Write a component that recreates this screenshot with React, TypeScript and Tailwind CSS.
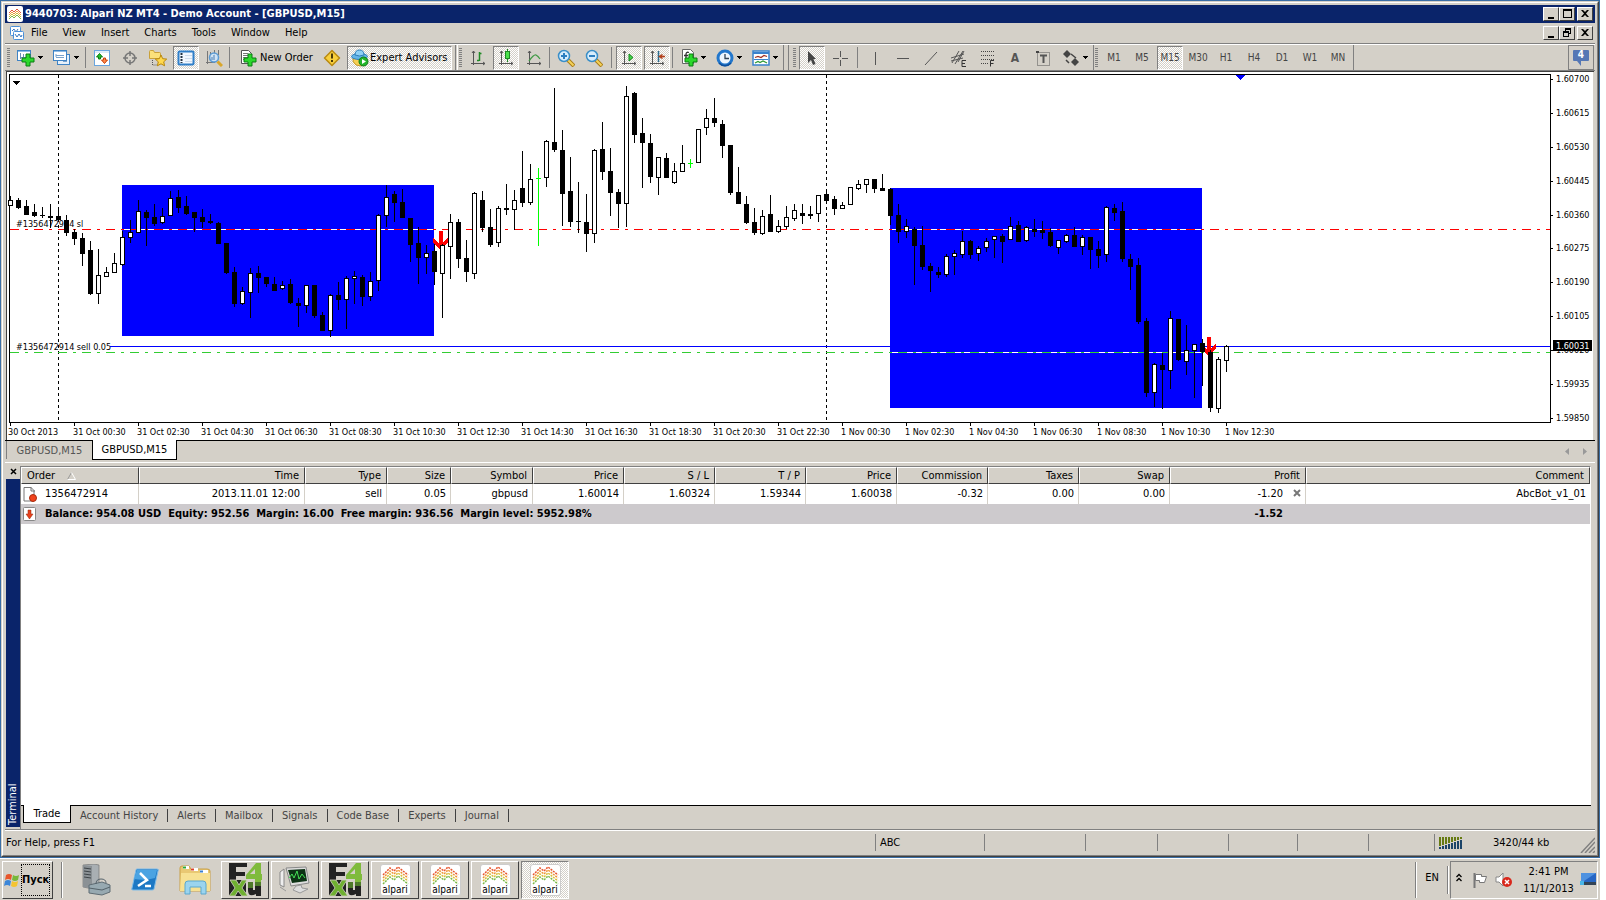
import React from 'react'

type Kind = 'w' | 'b' | 'g'
type Candle = [number, number, number, number, Kind]

// high, body top, body bottom, low, fill
const CANDLES: Candle[] = [
  [126, 130, 136, 136, 'w'], [128, 130, 138, 139, 'b'], [130, 136, 145, 145, 'b'], [134, 142, 146, 147, 'b'],
  [137, 145, 146, 148, 'b'], [134, 146, 148, 158, 'b'], [137, 146, 150, 151, 'b'], [145, 150, 163, 166, 'b'],
  [159, 162, 169, 175, 'b'], [163, 168, 184, 196, 'b'], [171, 180, 224, 225, 'b'], [179, 205, 224, 234, 'w'],
  [197, 202, 207, 207, 'w'], [183, 193, 203, 203, 'w'], [161, 167, 195, 196, 'w'], [150, 162, 168, 173, 'w'],
  [130, 141, 163, 163, 'w'], [140, 142, 148, 176, 'b'], [134, 147, 154, 156, 'b'], [138, 146, 153, 154, 'w'],
  [121, 128, 146, 146, 'w'], [120, 127, 138, 143, 'b'], [126, 136, 144, 145, 'b'], [142, 142, 148, 162, 'b'],
  [139, 147, 152, 158, 'b'], [144, 151, 153, 154, 'b'], [152, 153, 174, 174, 'b'], [173, 173, 203, 204, 'b'],
  [197, 202, 234, 237, 'b'], [217, 221, 234, 235, 'w'], [198, 203, 223, 248, 'w'], [196, 203, 208, 223, 'b'],
  [207, 207, 214, 217, 'b'], [207, 214, 221, 221, 'b'], [211, 215, 219, 220, 'w'], [209, 214, 233, 234, 'b'],
  [228, 233, 236, 257, 'b'], [215, 215, 236, 243, 'w'], [215, 215, 246, 248, 'b'], [242, 245, 261, 261, 'b'],
  [224, 225, 261, 267, 'w'], [212, 225, 230, 240, 'b'], [206, 208, 230, 259, 'w'], [201, 206, 209, 234, 'w'],
  [205, 207, 227, 236, 'b'], [202, 211, 227, 231, 'w'], [144, 145, 211, 221, 'w'], [115, 127, 146, 157, 'w'],
  [121, 124, 133, 152, 'b'], [119, 132, 148, 148, 'b'], [148, 148, 175, 192, 'b'], [157, 173, 188, 214, 'b'],
  [175, 183, 188, 204, 'w'], [174, 181, 202, 215, 'b'], [174, 175, 204, 248, 'w'], [144, 152, 177, 209, 'w'],
  [149, 152, 189, 198, 'b'], [170, 188, 202, 212, 'b'], [122, 123, 204, 209, 'w'], [121, 130, 158, 162, 'b'],
  [139, 157, 175, 177, 'b'], [136, 138, 173, 177, 'w'], [114, 138, 140, 145, 'b'], [120, 130, 140, 160, 'w'],
  [81, 118, 133, 137, 'b'], [94, 109, 133, 135, 'w'], [98, 108, 109, 176, 'g'], [70, 71, 108, 117, 'w'],
  [18, 72, 80, 82, 'b'], [60, 80, 124, 156, 'b'], [87, 121, 152, 157, 'b'], [112, 151, 152, 163, 'b'],
  [124, 152, 164, 182, 'b'], [79, 80, 164, 173, 'w'], [52, 79, 102, 110, 'b'], [78, 101, 123, 146, 'b'],
  [119, 122, 134, 158, 'b'], [16, 26, 134, 157, 'w'], [22, 23, 65, 73, 'b'], [48, 63, 73, 118, 'b'],
  [64, 73, 107, 113, 'b'], [87, 87, 108, 125, 'w'], [83, 88, 108, 108, 'b'], [93, 101, 113, 114, 'w'],
  [75, 93, 102, 102, 'w'], [89, 93, 94, 98, 'g'], [59, 59, 93, 93, 'w'], [39, 48, 58, 65, 'w'],
  [28, 48, 53, 57, 'b'], [50, 54, 76, 88, 'b'], [75, 75, 123, 125, 'b'], [97, 122, 134, 134, 'b'],
  [126, 134, 153, 154, 'b'], [138, 152, 163, 165, 'b'], [140, 146, 164, 165, 'w'], [125, 144, 162, 162, 'b'],
  [150, 156, 162, 163, 'w'], [136, 147, 157, 159, 'w'], [134, 140, 149, 151, 'w'], [134, 143, 146, 154, 'b'],
  [136, 144, 146, 149, 'b'], [125, 125, 144, 152, 'w'], [120, 124, 131, 134, 'b'], [126, 129, 139, 145, 'b'],
  [132, 135, 139, 139, 'w'], [117, 117, 135, 135, 'w'], [110, 114, 119, 120, 'w'], [109, 109, 115, 123, 'w'],
  [109, 109, 119, 123, 'b'], [104, 118, 121, 121, 'b'], [118, 119, 146, 155, 'b'], [134, 145, 162, 173, 'b'],
  [149, 156, 162, 168, 'w'], [157, 159, 176, 215, 'b'], [156, 175, 197, 200, 'b'], [193, 196, 201, 222, 'b'],
  [197, 202, 205, 208, 'b'], [184, 186, 205, 207, 'w'], [180, 183, 187, 205, 'w'], [161, 171, 185, 188, 'w'],
  [170, 171, 185, 189, 'b'], [176, 178, 184, 191, 'w'], [168, 171, 178, 182, 'w'], [166, 166, 170, 188, 'w'],
  [164, 166, 172, 193, 'b'], [147, 156, 170, 170, 'w'], [151, 155, 172, 172, 'b'], [156, 157, 171, 172, 'w'],
  [149, 159, 162, 167, 'b'], [151, 160, 163, 169, 'b'], [158, 162, 176, 177, 'b'], [170, 170, 178, 184, 'w'],
  [164, 165, 172, 173, 'w'], [157, 165, 177, 177, 'b'], [165, 167, 177, 185, 'w'], [167, 167, 180, 199, 'b'],
  [171, 179, 186, 198, 'b'], [136, 137, 185, 192, 'w'], [134, 138, 143, 151, 'b'], [132, 141, 189, 192, 'b'],
  [184, 189, 197, 220, 'b'], [188, 195, 252, 254, 'b'], [248, 251, 323, 327, 'b'], [293, 294, 323, 337, 'w'],
  [283, 295, 300, 339, 'b'], [241, 248, 301, 319, 'w'], [249, 249, 290, 291, 'b'], [255, 280, 292, 305, 'w'],
  [274, 274, 281, 328, 'w'], [269, 273, 282, 316, 'b'], [280, 282, 338, 342, 'b'], [287, 289, 339, 343, 'w'],
  [275, 276, 291, 302, 'w'],
]

const TIMES = [
  '30 Oct 2013', '31 Oct 00:30', '31 Oct 02:30', '31 Oct 04:30', '31 Oct 06:30', '31 Oct 08:30', '31 Oct 10:30',
  '31 Oct 12:30', '31 Oct 14:30', '31 Oct 16:30', '31 Oct 18:30', '31 Oct 20:30', '31 Oct 22:30', '1 Nov 00:30',
  '1 Nov 02:30', '1 Nov 04:30', '1 Nov 06:30', '1 Nov 08:30', '1 Nov 10:30', '1 Nov 12:30',
]

const PRICES: [string, number][] = [
  ['1.60700', 9], ['1.60615', 43], ['1.60530', 77], ['1.60445', 111], ['1.60360', 145], ['1.60275', 178],
  ['1.60190', 212], ['1.60105', 246], ['1.60020', 280], ['1.59935', 314], ['1.59850', 348],
]

const RAISED = 'border border-t-white border-l-white border-r-[#404040] border-b-[#404040] bg-[#d4d0c8]'
const PRESSED =
  'border border-t-[#808080] border-l-[#808080] border-r-white border-b-white bg-[repeating-conic-gradient(#fff_0_25%,#d4d0c8_0_50%)] bg-[length:2px_2px]'

function Candles() {
  return (
    <>
      {CANDLES.map(([high, top, bottom, low, kind], i) => {
        const x = 10 + i * 8
        const color = kind === 'g' ? '#0f0' : '#000'
        return (
          <g key={i}>
            <rect x={x} y={high} width="1" height={low - high} fill={color} />
            <rect x={x - 2} y={top} width="5" height={bottom - top} fill={color} />
            {kind === 'w' ? <rect x={x - 1} y={top + 1} width="3" height={bottom - top - 2} fill="#fff" /> : null}
          </g>
        )
      })}
    </>
  )
}

function SellArrow({ x, y }: { x: number; y: number }) {
  return <path d={`M${x - 2} ${y}h4v11l5-4v4l-4 4-3 3h-1l-3-2-4-4v-5l6 5z`} fill="#f00" />
}

function Chart() {
  return (
    <div className="flex h-[369px] border-t border-l border-[#404040] bg-white text-[9px]">
      <svg className="h-[368px] min-w-0 flex-1" shapeRendering="crispEdges" role="img" aria-label="GBPUSD,M15">
        <rect x="2" y="2" width="100%" height="1" />
        <rect x="2" y="350" width="100%" height="1" />
        <rect x="2" y="2" width="1" height="349" />
        <g transform="translate(-7 -2)">
          <path d="M13 11h7v1h-1v1h-1v1h-1v1h-1v-1h-1v-1h-1v-1h-1z" />
          <path d="M1236 5h9l-4 5h-1z" fill="#00f" />
          <path d="M58.5 5v345M826.5 5v345" stroke="#000" strokeDasharray="3 3" />
          <rect x="110" y="276" width="100%" height="1" fill="#00f" />
          <rect x="122" y="115" width="312" height="151" fill="#00f" />
          <rect x="890" y="118" width="312" height="220" fill="#00f" />
          <path d="M122 159.500H434M890 159.500H1202M890 282.500H1202" stroke="#fff" />
          <path d="M10 159.500H4000" stroke="#f00" strokeDasharray="9 6 3 6" />
          <path d="M10 282.500H4000" stroke="#32cd32" strokeDasharray="9 6 3 6" />
          <text x="16" y="157">#1356472914 sl</text>
          <text x="16" y="280">#1356472914 sell 0.05</text>
          <SellArrow x={441} y={161} />
          <SellArrow x={1209} y={267} />
          <Candles />
          {TIMES.map((time, i) => (
            <g key={time}>
              <rect x={10 + i * 64} y="353" width="1" height="3" />
              <text x={(i ? 9 : 8) + i * 64} y="365">
                {time}
              </text>
            </g>
          ))}
        </g>
      </svg>
      <svg className="h-[368px] w-[44px] shrink-0 border-r border-[#d4d0c8]" shapeRendering="crispEdges">
        <rect y="2" width="1" height="349" />
        {PRICES.map(([price, y]) => (
          <g key={price}>
            <rect x="1" y={y - 2} width="2" height="1" />
            <text x="6" y={y + 1}>
              {price}
            </text>
          </g>
        ))}
        <rect x="3" y="268" width="39" height="11" />
        <text x="6" y="277" fill="#fff">
          1.60031
        </text>
      </svg>
    </div>
  )
}

function Svg({ children, size = 18 }: { children: React.ReactNode; size?: number }) {
  return (
    <svg width={size} height={size} viewBox={`0 0 ${size} ${size}`} fill="none" className="shrink-0" aria-hidden="true">
      {children}
    </svg>
  )
}

const PLUS = <path d="M10 6h4v4h4v4h-4v4h-4v-4H6v-4h4z" fill="#2bd82b" stroke="#0a7d12" transform="translate(-1 -1)" />
const AXES = <path d="M4.500 2v14M2 14.500h14M3 4l1.500-2L6 4M14 13l2 1.500-2 1.500" stroke="#555" />

const icons = {
  newChart: (
    <Svg>
      <rect x=".5" y="1.500" width="13" height="10" fill="#fff" stroke="#3f83c4" />
      <path d="M1 2.500h12" stroke="#8fbce6" />
      <path d="M3.500 4v6M3 8.500h7M6.500 5v3" stroke="#6b8fb3" />
      {PLUS}
    </Svg>
  ),
  profiles: (
    <Svg>
      <rect x="4.500" y="5.500" width="12" height="10" fill="#e6f0fa" stroke="#3f83c4" />
      <rect x=".5" y="1.500" width="13" height="10" fill="#fff" stroke="#3f83c4" />
      <path d="M1 2.500h12" stroke="#8fbce6" />
      <path d="M3 6.500h8M3 8.500h8M10 12.500h4M3 5v3" stroke="#7aa3cc" />
    </Svg>
  ),
  market: (
    <Svg>
      <rect x="1.500" y="1.500" width="15" height="15" fill="#fff" stroke="#6aa5de" />
      <path d="M2 3h14" stroke="#bcd8f2" />
      <path d="M6.500 4.500l3 3.500h-2v2h-2V8h-2z" fill="#1fc02a" stroke="#0b7a13" />
      <path d="M11.500 14.500l3-3.500h-2V9h-2v2h-2z" fill="#ff8a4a" stroke="#c8400c" />
    </Svg>
  ),
  crosshair: (
    <Svg>
      <circle cx="9" cy="9" r="5" stroke="#777" strokeWidth="1.500" />
      <path d="M9 2v5M9 11v5M2 9h5M11 9h5" stroke="#777" strokeWidth="1.500" />
    </Svg>
  ),
  navigator: (
    <Svg>
      <path d="M.5 2.500q0-1 1-1h3l1 2h5q1 0 1 1v5h-11z" fill="#fbe07a" stroke="#c9a13a" />
      <path d="M3.500 11v5h5" stroke="#555" strokeDasharray="1 1" />
      <path d="M12 6l1.700 3.700 4 .4-3 2.700.9 4-3.600-2-3.600 2 .9-4-3-2.700 4-.4z" fill="#ffd84d" stroke="#b8860b" />
    </Svg>
  ),
  terminal: (
    <Svg>
      <rect x="1.500" y="2.500" width="15" height="13" rx="1" fill="#f2f8ff" stroke="#2f7fc9" strokeWidth="2" />
      <path d="M4.500 4v10" stroke="#234" strokeWidth="2" strokeDasharray="2 1" />
      <path d="M8 6.500h7M8 9.500h7M8 12.500h7" stroke="#cfdcec" />
    </Svg>
  ),
  tester: (
    <Svg>
      <path d="M2.500 2v13M1 13.500h9M5.500 3v8M9.500 1v5M13.500 1v5" stroke="#777" />
      <circle cx="9" cy="8.500" r="4.500" fill="#cfe6fb" fillOpacity=".85" stroke="#5b9bd5" strokeWidth="1.500" />
      <path d="M12.500 12.500l4.500 4.500" stroke="#d9a62a" strokeWidth="3" />
      <path d="M9 6v5M7 8v3" stroke="#4a7fb5" />
    </Svg>
  ),
  order: (
    <Svg>
      <path d="M2.500 1.500h7l3 3v10h-10z" fill="#fff" stroke="#555" />
      <path d="M4 4.500h5M4 6.500h6M4 8.500h5M4 10.500h3" stroke="#777" />
      {PLUS}
    </Svg>
  ),
  warning: (
    <Svg>
      <path d="M9 1.500L16.500 9 9 16.500 1.500 9z" fill="#f8cf3c" stroke="#b98a10" strokeWidth="1.500" strokeLinejoin="round" />
      <path d="M9 4.500v5M9 11v2" stroke="#4b3a08" strokeWidth="2" />
    </Svg>
  ),
  expert: (
    <Svg>
      <path d="M2 9q-1 4 3 7l5 1q5-2 4-9z" fill="#f6cf52" stroke="#c2962a" />
      <ellipse cx="8.500" cy="7.500" rx="8" ry="3" fill="#62b4e8" stroke="#2b7cb8" />
      <path d="M4 6q0-5 4.500-5T13 6q-4.500 2-9 0z" fill="#8ed0f5" stroke="#2b7cb8" />
      <circle cx="12.500" cy="12.500" r="4.500" fill="#22b52a" stroke="#0d7a15" />
      <path d="M11 10l4 2.500-4 2.500z" fill="#fff" />
    </Svg>
  ),
  bars: (
    <Svg>
      {AXES}
      <path d="M10.500 3v9M10.500 4.500h2M8 11.500h2" stroke="#1f8a24" strokeWidth="1.500" />
    </Svg>
  ),
  candles: (
    <Svg>
      {AXES}
      <path d="M10.500 0v13" stroke="#1f8a24" />
      <rect x="8.500" y="2.500" width="4" height="7" fill="#4be04b" stroke="#1f8a24" />
    </Svg>
  ),
  line: (
    <Svg>
      {AXES}
      <path d="M4 12q5-7 7-6t4 4" stroke="#3f9a44" strokeWidth="1.300" />
    </Svg>
  ),
  zoomIn: (
    <Svg>
      <path d="M11 11l6 6" stroke="#a97c18" strokeWidth="4" />
      <path d="M11 11l5.500 5.500" stroke="#f4d25a" strokeWidth="2" />
      <circle cx="7" cy="7" r="5.500" fill="#d7edfc" stroke="#3a8fc8" strokeWidth="1.500" />
      <path d="M7 4v6M4 7h6" stroke="#2d7fc0" strokeWidth="2" />
    </Svg>
  ),
  zoomOut: (
    <Svg>
      <path d="M11 11l6 6" stroke="#a97c18" strokeWidth="4" />
      <path d="M11 11l5.500 5.500" stroke="#f4d25a" strokeWidth="2" />
      <circle cx="7" cy="7" r="5.500" fill="#d7edfc" stroke="#3a8fc8" strokeWidth="1.500" />
      <path d="M4 7h6" stroke="#2d7fc0" strokeWidth="2" />
    </Svg>
  ),
  scroll: (
    <Svg>
      {AXES}
      <path d="M9 5l4 3.500L9 12z" fill="#3fce45" stroke="#138a1b" />
    </Svg>
  ),
  shift: (
    <Svg>
      {AXES}
      <path d="M10.500 2v11" stroke="#2a6b8f" strokeWidth="1.500" />
      <path d="M17 7.500h-5M14.500 5.500l-3 2 3 2" stroke="#b2401c" strokeWidth="1.500" />
    </Svg>
  ),
  indicators: (
    <Svg>
      <path d="M2.500 .5h8l3 3v11h-11z" fill="#fff" stroke="#666" />
      <path d="M9 3.500q-3-1-3 2v6M4 6.500h4" stroke="#333" strokeWidth="1.300" />
      {PLUS}
    </Svg>
  ),
  clock: (
    <Svg>
      <circle cx="9" cy="9" r="7" fill="#eef6fd" stroke="#2277cc" strokeWidth="3" />
      <path d="M9 5v4.500h4" stroke="#345" strokeWidth="1.300" />
      <path d="M3 14a8 8 0 0 0 12 0" stroke="#0d4f9c" strokeWidth="1.500" />
    </Svg>
  ),
  template: (
    <Svg>
      <rect x="1" y="2" width="16" height="14" fill="#fff" stroke="#3a82cc" strokeWidth="1.500" />
      <path d="M1 4h16" stroke="#3a82cc" strokeWidth="2" />
      <path d="M3 8.500l3-1 3 1 3-2 3 1" stroke="#a03020" strokeWidth="1.300" />
      <path d="M2 10.500h14" stroke="#3a82cc" />
      <path d="M3 14l3-1.500 2 1 3-1.500 4 2" stroke="#2e9a34" strokeWidth="1.200" />
    </Svg>
  ),
  cursor: (
    <Svg>
      <path d="M5 2v12l3-3 2 5 2.500-1-2-5H13z" fill="#444" />
    </Svg>
  ),
  cross: (
    <Svg>
      <path d="M9.500 2v6M9.500 11v6M2 9.500h6M11 9.500h6" stroke="#555" />
    </Svg>
  ),
  vline: (
    <Svg>
      <path d="M9.500 3v13" stroke="#555" />
    </Svg>
  ),
  hline: (
    <Svg>
      <path d="M3 9.500h12" stroke="#555" />
    </Svg>
  ),
  trend: (
    <Svg>
      <path d="M3 16L15 3" stroke="#555" />
    </Svg>
  ),
  channel: (
    <Svg>
      <path d="M2 14L9 2M5 15l8-13M8 13l6-11M1 9l13-4M1 12l12-3" stroke="#555" />
      <path d="M16 11.500h-4v6h4M12 14.500h3" stroke="#333" />
    </Svg>
  ),
  fibo: (
    <Svg>
      <path d="M3 2.500h13M3 6.500h13M3 10.500h13M3 14.500h8" stroke="#444" strokeDasharray="1 1" />
      <path d="M16 11.500h-3.500v6M12.500 14.500h3" stroke="#333" />
    </Svg>
  ),
  label: (
    <Svg>
      <rect x="3.500" y="3.500" width="12" height="13" stroke="#555" strokeDasharray="1 1" />
      <path d="M6 6.500h7M9.500 6v8" stroke="#555" strokeWidth="2" />
      <path d="M2 2h3v2H2z" fill="#444" />
    </Svg>
  ),
  arrows: (
    <Svg>
      <path d="M5 1l4 4-4 4-4-4zM13 9l4 4-4 4-4-4z" fill="#444" />
      <path d="M4 11l3 3M9 5l5 4" stroke="#444" strokeWidth="1.500" />
    </Svg>
  ),
}

type IconName = keyof typeof icons

function Tool({ icon, label, pressed }: { icon: IconName; label: string; pressed?: boolean }) {
  return (
    <button
      type="button"
      aria-label={label}
      aria-pressed={pressed}
      className={`mx-px flex h-6 w-[26px] items-center justify-center ${pressed ? PRESSED : ''}`}
    >
      {icons[icon]}
    </button>
  )
}

function Caret() {
  return (
    <svg width="5" height="3" viewBox="0 0 5 3" shapeRendering="crispEdges" aria-hidden="true">
      <path d="M0 0h5v1H4v1H3v1H2V2H1V1H0z" />
    </svg>
  )
}

function SplitTool({ icon, label }: { icon: IconName; label: string }) {
  return (
    <button type="button" aria-label={label} className="flex h-6 w-9 items-center gap-[3px] pl-[5px]">
      {icons[icon]}
      <Caret />
    </button>
  )
}

function Divider({ wide }: { wide?: boolean }) {
  return <div className={`h-[21px] w-px shrink-0 bg-[#808080] ${wide ? 'mx-[3px]' : 'mr-[2px] ml-px'}`} />
}

function Grip() {
  return (
    <div className="mr-[2px] ml-px h-5 w-[3px] shrink-0 bg-[repeating-linear-gradient(#808080_0_1px,#d4d0c8_1px_2px)]" />
  )
}

function Toolbar() {
  return (
    <div className="flex h-[27px] items-center border-t border-b border-t-white border-b-[#808080] bg-[#d4d0c8]">
      <div className="flex h-full items-center border-r border-[#808080] pr-[3px] pl-px">
        <Grip />
        <SplitTool icon="newChart" label="New Chart" />
        <SplitTool icon="profiles" label="Profiles" />
        <Divider />
        <Tool icon="market" label="Market Watch" />
        <Tool icon="crosshair" label="Data Window" />
        <Tool icon="navigator" label="Navigator" />
        <Tool icon="terminal" label="Terminal" pressed />
        <Tool icon="tester" label="Strategy Tester" />
        <Divider />
        <button type="button" className="flex h-6 w-[86px] items-center gap-[3px] pl-[7px] whitespace-nowrap">
          {icons.order}
          New Order
        </button>
        <Tool icon="warning" label="MetaEditor" />
        <button
          type="button"
          aria-pressed
          className={`ml-px flex h-6 w-[105px] items-center gap-px pl-[3px] whitespace-nowrap ${PRESSED}`}
        >
          {icons.expert}
          Expert Advisors
        </button>
      </div>
      <div className="ml-px flex h-full items-center border-r border-l border-r-[#808080] border-l-white">
        <Grip />
        <Tool icon="bars" label="Bar Chart" />
        <Tool icon="candles" label="Candlesticks" pressed />
        <Tool icon="line" label="Line Chart" />
        <Divider />
        <Tool icon="zoomIn" label="Zoom In" />
        <Tool icon="zoomOut" label="Zoom Out" />
        <Divider wide />
        <Tool icon="scroll" label="Auto Scroll" pressed />
        <Tool icon="shift" label="Chart Shift" pressed />
        <Divider />
        <SplitTool icon="indicators" label="Indicators" />
        <SplitTool icon="clock" label="Periods" />
        <SplitTool icon="template" label="Templates" />
      </div>
      <div className="ml-1 flex h-full items-center border-r border-l border-r-[#808080] border-l-[#808080] pl-[3px]">
        <Grip />
        <Tool icon="cursor" label="Cursor" pressed />
        <Tool icon="cross" label="Crosshair" />
        <Divider wide />
        <Tool icon="vline" label="Vertical Line" />
        <Tool icon="hline" label="Horizontal Line" />
        <Tool icon="trend" label="Trendline" />
        <Tool icon="channel" label="Equidistant Channel" />
        <Tool icon="fibo" label="Fibonacci Retracement" />
        <button type="button" className="mx-px h-6 w-[26px] text-xs font-bold text-[#555]">
          A
        </button>
        <Tool icon="label" label="Text Label" />
        <SplitTool icon="arrows" label="Arrows" />
      </div>
      <div className="flex h-full items-center border-r border-[#808080] pr-px">
        <Grip />
        {['M1', 'M5', 'M15', 'M30', 'H1', 'H4', 'D1', 'W1', 'MN'].map((p) => (
          <button
            key={p}
            type="button"
            aria-pressed={p === 'M15'}
            className={`mx-px h-6 w-[26px] text-center text-[10px] text-[#444] ${p === 'M15' ? PRESSED : ''}`}
          >
            {p}
          </button>
        ))}
      </div>
      <button
        type="button"
        className="relative mr-px ml-auto flex h-[25px] w-[26px] items-center justify-center border border-[#808080]"
      >
        <svg width="18" height="18" viewBox="0 0 18 18" aria-hidden="true">
          <path d="M2 1h14q1 0 1 1v9q0 1-1 1H9v5l-4-5H2q-1 0-1-1V2q0-1 1-1z" fill="#5577b5" />
        </svg>
        <span className="absolute inset-x-0 top-[3px] text-center text-[10px] leading-3 font-bold text-white">4</span>
      </button>
    </div>
  )
}

function WinButton({ kind, label }: { kind: 'min' | 'max' | 'restore' | 'close'; label: string }) {
  const paths = {
    min: 'M3 9h6v2H3z',
    max: 'M2 1h9v9H2zM3 3v6h7V3z',
    restore: 'M4 1h6v6H8v3H2V4h2zM5 3v1h3v2h1V3zM3 6v3h4V6z',
    close: 'M2 2h2l2 2 2-2h2L7 5.500 10 9H8L6 7 4 9H2l3-3.500z',
  }
  return (
    <button
      type="button"
      aria-label={label}
      className={`flex h-[14px] w-4 items-center justify-center ${RAISED} ${kind === 'close' ? 'ml-[2px]' : ''}`}
    >
      <svg width="12" height="12" viewBox="0 0 12 12" className="shrink-0" fillRule="evenodd" aria-hidden="true">
        <path d={paths[kind]} />
      </svg>
    </button>
  )
}

function WaveLogo() {
  return (
    <svg width="16" height="16" viewBox="0 0 16 16" fill="none" aria-hidden="true">
      <rect width="16" height="16" rx="2" fill="#fff" />
      <path d="M2 7l3-3 2 2 3-3 4 4" stroke="#e2593b" />
      <path d="M2 9l3-3 2 2 3-3 4 4" stroke="#ef9a3c" />
      <path d="M2 11l3-3 2 2 3-3 4 4" stroke="#cdbb3c" />
      <path d="M2 13l3-3 2 2 3-3 4 4" stroke="#7fb548" />
    </svg>
  )
}

function Header() {
  return (
    <header>
      <div className="flex h-[18px] items-center bg-[#0a246a] pr-[2px] pl-[2px]">
        <WaveLogo />
        <h1 className="ml-[2px] text-[11px] font-bold whitespace-nowrap text-white">
          9440703: Alpari NZ MT4 - Demo Account - [GBPUSD,M15]
        </h1>
        <div className="ml-auto flex">
          <WinButton kind="min" label="Minimize" />
          <WinButton kind="max" label="Maximize" />
          <WinButton kind="close" label="Close" />
        </div>
      </div>
      <div className="flex h-[21px] items-center border-b border-[#808080] pr-[2px] pl-1">
        <svg width="16" height="16" viewBox="0 0 16 16" fill="none" aria-hidden="true">
          <rect x="1.500" y="1.500" width="10" height="9" rx="1" fill="#fff" stroke="#4a90d9" />
          <path d="M3 6l2-2 2 3 2-3" stroke="#3a78c0" />
          <rect x="4.500" y="6.500" width="10" height="8" rx="1" fill="#fff" stroke="#4a90d9" />
          <path d="M6 9l2 3 2-3 2 3 1-2" stroke="#3a78c0" />
        </svg>
        <nav className="ml-[6px] flex gap-[15px]">
          {['File', 'View', 'Insert', 'Charts', 'Tools', 'Window', 'Help'].map((m) => (
            <button key={m} type="button">
              {m}
            </button>
          ))}
        </nav>
        <div className="ml-auto flex">
          <WinButton kind="min" label="Minimize chart" />
          <WinButton kind="restore" label="Restore chart" />
          <WinButton kind="close" label="Close chart" />
        </div>
      </div>
    </header>
  )
}

function ChartTabs() {
  return (
    <div className="flex h-[21px] items-start border-t border-black pl-px">
      <button type="button" className="h-[18px] w-[86px] border-l border-[#808080] pt-[2px] text-[#555]">
        GBPUSD,M15
      </button>
      <button type="button" className="-mt-px h-[20px] w-[85px] border-x border-b border-black bg-white pt-px">
        GBPUSD,M15
      </button>
      <div className="mt-[7px] mr-2 ml-auto flex gap-[14px]">
        <svg width="4" height="7" viewBox="0 0 4 7" aria-hidden="true">
          <path d="M4 0v7L0 3.500z" fill="#999" />
        </svg>
        <svg width="4" height="7" viewBox="0 0 4 7" aria-hidden="true">
          <path d="M0 0v7l4-3.500z" fill="#999" />
        </svg>
      </div>
    </div>
  )
}

const HEADS = ['Time', 'Type', 'Size', 'Symbol', 'Price', 'S / L', 'T / P', 'Price', 'Commission', 'Taxes', 'Swap', 'Profit', 'Comment']
const CELLS = ['2013.11.01 12:00', 'sell', '0.05', 'gbpusd', '1.60014', '1.60324', '1.59344', '1.60038', '-0.32', '0.00', '0.00']
const TH = 'border border-t-white border-l-white border-r-[#404040] border-b-[#404040] p-0 font-normal'
const TD = 'border-r border-[#d4d0c8] p-0 pr-1 text-right'

function Orders() {
  return (
    <table className="w-full table-fixed border-separate border-spacing-0 whitespace-nowrap">
      <colgroup>
        <col className="w-[118px]" />
        <col className="w-[166px]" />
        <col className="w-[82px]" />
        <col className="w-[64px]" />
        <col className="w-[82px]" />
        {[0, 1, 2, 3, 4, 5, 6].map((i) => (
          <col key={i} className="w-[91px]" />
        ))}
        <col className="w-[136px]" />
        <col />
      </colgroup>
      <thead className="bg-[#d4d0c8]">
        <tr className="h-[17px]">
          <th className={`${TH} pl-[5px] text-left`}>
            Order
            <svg width="9" height="8" viewBox="0 0 9 8" fill="none" className="ml-3 inline" aria-hidden="true">
              <path d="M4.500 .5l-4 7" stroke="#999" />
              <path d="M4.500 .5l4 7h-8" stroke="#fff" />
            </svg>
          </th>
          {HEADS.map((h, i) => (
            <th key={i} className={`${TH} pr-[5px] text-right`}>
              {h}
            </th>
          ))}
        </tr>
      </thead>
      <tbody>
        <tr className="h-5">
          <td className="border-r border-[#d4d0c8] p-0">
            <div className="flex items-center gap-2 pl-[2px]">
              <svg width="14" height="16" viewBox="0 0 14 16" fill="none" aria-hidden="true">
                <path d="M1 1.500h7l3 3V15H1z" fill="#fff" stroke="#777" />
                <path d="M8 1v4h4" stroke="#777" />
                <circle cx="10" cy="12" r="3.500" fill="#f0431c" stroke="#a82a0c" />
              </svg>
              1356472914
            </div>
          </td>
          {CELLS.map((c, i) => (
            <td key={i} className={TD}>
              {c}
            </td>
          ))}
          <td className={TD}>
            -1.20
            <button type="button" aria-label="Close order" className="ml-[10px] inline-block">
              <svg width="8" height="8" viewBox="0 0 8 8" aria-hidden="true">
                <path d="M1 1l6 6M7 1L1 7" stroke="#777" strokeWidth="2" />
              </svg>
            </button>
          </td>
          <td className="p-0 pr-1 text-right">AbcBot_v1_01</td>
        </tr>
        <tr className="h-5 bg-[#cdcacd] font-bold">
          <td colSpan={12} className="p-0">
            <div className="flex items-center gap-2 pl-[2px] whitespace-pre">
              <svg width="14" height="16" viewBox="0 0 14 16" aria-hidden="true">
                <rect x=".5" y="1.500" width="12" height="13" rx="1" fill="#fff" stroke="#888" />
                <path d="M5 4h3v4h2l-3.500 5L3 8h2z" fill="#e8401c" stroke="#902408" strokeWidth=".5" />
              </svg>
              {'Balance: 954.08 USD  Equity: 952.56  Margin: 16.00  Free margin: 936.56  Margin level: 5952.98%'}
            </div>
          </td>
          <td className="p-0 pr-[23px] text-right">-1.52</td>
          <td className="p-0" />
        </tr>
      </tbody>
    </table>
  )
}

function Terminal() {
  return (
    <section className="mt-px flex min-h-0 flex-1 border-t border-white pl-px">
      <div className="mt-[3px] mb-[2px] flex w-[14px] shrink-0 flex-col">
        <button type="button" aria-label="Close terminal" className="flex h-[13px] items-start justify-center pt-[2px]">
          <svg width="7" height="7" viewBox="0 0 7 7" aria-hidden="true">
            <path d="M1 1l5 5M6 1L1 6" stroke="#000" strokeWidth="1.500" />
          </svg>
        </button>
        <div className="flex flex-1 rotate-180 items-start justify-start bg-[#0a246a] text-white">
          <span className="pt-[2px] leading-[14px] [writing-mode:vertical-rl]">Terminal</span>
        </div>
      </div>
      <div className="mt-[3px] mr-1 flex min-w-0 flex-1 flex-col border-l border-[#808080]">
        <div className="flex-1 border-t border-r border-t-[#808080] border-r-white bg-white">
          <Orders />
        </div>
        <div className="flex h-6 items-start border-t border-black pl-[2px]">
          <button type="button" className="-mt-px h-[18px] w-12 border-x border-b border-black bg-white">
            Trade
          </button>
          {['Account History', 'Alerts', 'Mailbox', 'Signals', 'Code Base', 'Experts', 'Journal'].map((t) => (
            <button
              key={t}
              type="button"
              className="mt-[3px] h-[13px] border-r border-[#404040] pr-[9px] pl-[9px] leading-[13px] text-[#444]"
            >
              {t}
            </button>
          ))}
        </div>
      </div>
    </section>
  )
}

function StatusBar() {
  return (
    <footer className="flex h-[26px] items-start border-t border-[#808080]">
      <div className="flex h-6 flex-1 items-center border-t border-white pl-px">For Help, press F1</div>
      <div className="flex h-6 items-center border-t border-white">
        <div className="h-[17px] w-[109px] border-l border-[#808080] pl-1 leading-[17px]">ABC</div>
        <div className="h-[17px] w-[101px] border-l border-[#808080]" />
        <div className="h-[17px] w-[72px] border-l border-[#808080]" />
        <div className="h-[17px] w-[71px] border-l border-[#808080]" />
        <div className="h-[17px] w-[69px] border-l border-[#808080]" />
        <div className="h-[17px] w-[71px] border-l border-[#808080]" />
        <div className="h-[17px] w-[66px] border-l border-[#808080]" />
        <div className="flex h-[17px] w-[146px] items-center border-l border-[#808080] pl-1">
          <svg width="24" height="12" viewBox="0 0 24 12" shapeRendering="crispEdges" aria-hidden="true">
            {[0, 1, 2, 3, 4, 5, 6, 7].map((i) => (
              <g key={i}>
                <rect x={i * 3} y="0" width="2" height={9 - i} fill="#667a12" />
                <rect x={i * 3} y={10 - i} width="2" height={2 + i} fill="#1c4468" />
              </g>
            ))}
          </svg>
          <span className="ml-[30px]">3420/44 kb</span>
        </div>
        <svg width="15" height="16" viewBox="0 0 15 16" className="mt-1" aria-hidden="true">
          <path d="M1 16L15 1M5 16L15 5M9 16l6-6M13 16l2-2" stroke="#808080" strokeWidth="1.500" />
        </svg>
      </div>
    </footer>
  )
}

function Fx4uIcon() {
  return (
    <svg width="33" height="33" viewBox="0 0 33 33" aria-hidden="true">
      <path d="M0 0h18v4H7v5h9v4H7v4H0z" fill="#232323" />
      <path d="M0 17h17v16H0z" fill="#232323" />
      <path d="M27 0h5v11h1v6h-1v2h-6v-3h-9v-4z" fill="#7fbb3c" />
      <path d="M26 6v5h-5z" fill="#d4d0c8" />
      <path d="M1 17h6l3 5 3-5h5l-5 8 6 8h-6l-4-5-3 5H0l6-8z" fill="#6fb031" stroke="#d4d0c8" strokeWidth=".8" />
      <path d="M19 19h5v8h2v-8h6v14h-5v-2q-8 4-8-4z" fill="#232323" />
      <path d="M19 19h5v6h-5z" fill="#4e7a2a" />
      <path d="M26 19h6v4h-6z" fill="#4e7a2a" />
    </svg>
  )
}

function MonitorIcon() {
  return (
    <svg width="32" height="32" viewBox="0 0 32 32" aria-hidden="true">
      <path d="M1 8l4-3v18l-4-2z" fill="#eee" stroke="#888" />
      <path d="M7 4l20-1 3 16-18 3z" fill="#dedede" stroke="#888" />
      <path d="M9 6l17-1 2 12-15 2z" fill="#0d3315" />
      <path d="M10 14l3-4 2 4 3-7 2 8 3-5 3 4" stroke="#45e055" fill="none" />
      <path d="M17 22l5-1 1 3 6 1-8 4-7-3z" fill="#ddd" stroke="#999" />
      <path d="M1 23l6 4" stroke="#999" />
    </svg>
  )
}

function AlpariIcon() {
  return (
    <span className="flex h-8 w-[31px] flex-col items-center rounded-[3px] border border-[#ccc] bg-white">
      <svg width="27" height="20" viewBox="0 0 27 20" fill="none" className="shrink-0" aria-hidden="true">
        <path d="M1 10l7-7 4 3 4-4 10 8" stroke="#e8552f" strokeDasharray="2 1" strokeWidth="1.500" />
        <path d="M1 13l7-7 4 3 4-4 10 8" stroke="#ee9433" strokeDasharray="2 1" strokeWidth="1.500" />
        <path d="M1 16l7-7 4 3 4-4 10 8" stroke="#d9bd35" strokeDasharray="2 1" strokeWidth="1.500" />
        <path d="M1 19l7-7 4 3 4-4 10 8" stroke="#7cba48" strokeDasharray="2 1" strokeWidth="1.500" />
      </svg>
      <span className="text-[10px] leading-[10px]">alpari</span>
    </span>
  )
}

function Taskbar() {
  const tasks = [<Fx4uIcon />, <MonitorIcon />, <Fx4uIcon />, <AlpariIcon />, <AlpariIcon />, <AlpariIcon />, <AlpariIcon />]
  const names = ['FX4U', 'Monitor', 'FX4U', '', '', '', '']
  return (
    <div className="flex h-[42px] items-center border-t border-white bg-[#d4d0c8] pl-[2px]">
      <button type="button" className={`flex h-[38px] w-[51px] items-center pl-px ${RAISED}`}>
        <svg width="16" height="16" viewBox="0 0 16 16" className="shrink-0" aria-hidden="true">
          <path d="M2 3q3-2 6 0L7 8Q4 6 1 8z" fill="#e8562b" />
          <path d="M9 3q3 2 6 0l-1 5q-3 2-6 0z" fill="#78b83a" />
          <path d="M1 9q3-2 6 0l-1 5q-3-2-6 0z" fill="#3c86d8" />
          <path d="M8 9q3 2 6 0l-1 5q-3 2-6 0z" fill="#f5c431" />
        </svg>
        <span className="ml-px flex h-8 items-center border border-dotted border-black font-bold">Пуск</span>
      </button>
      <div className="ml-2 h-9 w-[2px] border-l border-[#808080] bg-white" />
      <button type="button" aria-label="Server Manager" className="ml-[18px]">
        <svg width="32" height="32" viewBox="0 0 32 32" aria-hidden="true">
          <path d="M2 1l11-1 5 1v19l-6 5-10-2z" fill="#a9afb3" stroke="#777" strokeWidth=".7" />
          <path d="M2 1l9 1v22l-9-1z" fill="#8b9195" />
          <path d="M3 4l7 1M3 7l7 1M3 10l7 1M3 13l7 1" stroke="#3e4448" />
          <path d="M8 21l13-3 8 3v7l-8 3-13-2z" fill="#97a9b1" stroke="#5f6c74" />
          <path d="M8 24l13 2 8-3M15 20q0-5 5-5t5 4" stroke="#55626a" fill="none" />
        </svg>
      </button>
      <button type="button" aria-label="PowerShell" className="ml-[17px]">
        <svg width="30" height="26" viewBox="0 0 30 26" aria-hidden="true">
          <path d="M7 2h20q2 0 1 2l-4 18q0 1-2 1H3q-2 0-1-2L6 3q0-1 1-1z" fill="#1d78c4" stroke="#7dbbe8" />
          <path d="M7 3h20l-2 8q-9 3-21 1z" fill="#4aa3e2" />
          <path d="M10 6l7 7-9 6M15 19h6" stroke="#fff" strokeWidth="2.500" fill="none" />
        </svg>
      </button>
      <button type="button" aria-label="Windows Explorer" className="ml-[19px]">
        <svg width="32" height="32" viewBox="0 0 32 32" aria-hidden="true">
          <path d="M1 4q0-2 2-2h7l2 3h16q3 0 3 2v20H1z" fill="#e9c873" stroke="#c9a048" />
          <path d="M4 3.500h6M12 5.500h7M21 7.500h8" stroke="#fff" strokeWidth="3" />
          <path d="M4 3.500h3" stroke="#2ba836" strokeWidth="2" />
          <path d="M12 5.500h3" stroke="#d8402a" strokeWidth="2" />
          <path d="M21 7.500h3" stroke="#3a7fd0" strokeWidth="2" />
          <path d="M2 9h29v18H1z" fill="#f7e193" />
          <path d="M6 30V20q0-3 3-3h15q3 0 3 3v10h-5v-7H11v7z" fill="#9bd4ee" stroke="#5aa8cf" />
        </svg>
      </button>
      <div className="ml-[10px] flex gap-[2px]">
        {tasks.map((icon, i) => (
          <button
            key={i}
            type="button"
            aria-label={names[i] || undefined}
            className={`flex h-[38px] w-12 items-center justify-center ${i === 6 ? PRESSED : RAISED}`}
          >
            {icon}
          </button>
        ))}
      </div>
      <div className="ml-auto flex h-full items-center pr-[2px]">
        <div className="h-9 w-[2px] border-l border-[#808080] bg-white" />
        <span className="w-[30px] pb-1 text-center">EN</span>
        <div className="h-7 w-[2px] border-l border-[#808080] bg-white" />
        <div className="ml-px flex h-[38px] w-[148px] items-center border border-t-[#808080] border-r-white border-b-white border-l-[#808080] pl-[5px]">
          <svg width="6" height="9" viewBox="0 0 6 9" fill="none" className="mb-1 shrink-0" aria-hidden="true">
            <path d="M.5 4L3 1.500 5.500 4M.5 8L3 5.500 5.500 8" stroke="#000" strokeWidth="1.300" />
          </svg>
          <svg width="16" height="16" viewBox="0 0 16 16" className="ml-[10px] shrink-0" aria-hidden="true">
            <path d="M2.500 1v15" stroke="#777" strokeWidth="2" />
            <path d="M3.500 2.500h6v2h5l-2 6h-5v-2h-4z" fill="#fff" stroke="#777" />
          </svg>
          <svg width="18" height="16" viewBox="0 0 18 16" className="ml-[7px] shrink-0" aria-hidden="true">
            <path d="M1 5h3l4-4v13l-4-4H1z" fill="#fff" stroke="#888" />
            <circle cx="12" cy="10" r="5" fill="#d9281c" />
            <path d="M10 8l4 4M14 8l-4 4" stroke="#fff" strokeWidth="1.500" />
          </svg>
          <div className="ml-2 flex-1 text-center leading-[17px] whitespace-nowrap">
            2:41 PM
            <br />
            11/1/2013
          </div>
          <svg width="16" height="13" viewBox="0 0 16 13" className="mr-px ml-1 shrink-0" aria-hidden="true">
            <path d="M1 0h15v9H1z" fill="#2766c4" />
            <path d="M1 0h15L4 8H1z" fill="#4f92e0" />
            <path d="M0 9h16v3H0z" fill="#345" />
            <path d="M0 8h4v4H0z" fill="#49b6e8" />
          </svg>
        </div>
      </div>
    </div>
  )
}

export default function App() {
  return (
    <div className="flex min-h-screen flex-col bg-white pr-[6px] font-['DejaVu_Sans_Condensed','DejaVu_Sans',sans-serif] text-[11px] leading-[14px] text-black">
      <div className="flex flex-1 flex-col bg-[#3a6ea5] p-px">
        <main className="flex flex-1 flex-col border border-t-[#d4d0c8] border-r-[#404040] border-b-[#404040] border-l-[#d4d0c8] bg-[#d4d0c8]">
          <div className="flex flex-1 flex-col border border-t-white border-r-[#808080] border-b-[#808080] border-l-white p-[2px] pb-0">
            <Header />
            <Toolbar />
            <div className="pr-px pl-px">
              <Chart />
            </div>
            <ChartTabs />
            <Terminal />
            <StatusBar />
          </div>
        </main>
      </div>
      <Taskbar />
    </div>
  )
}
